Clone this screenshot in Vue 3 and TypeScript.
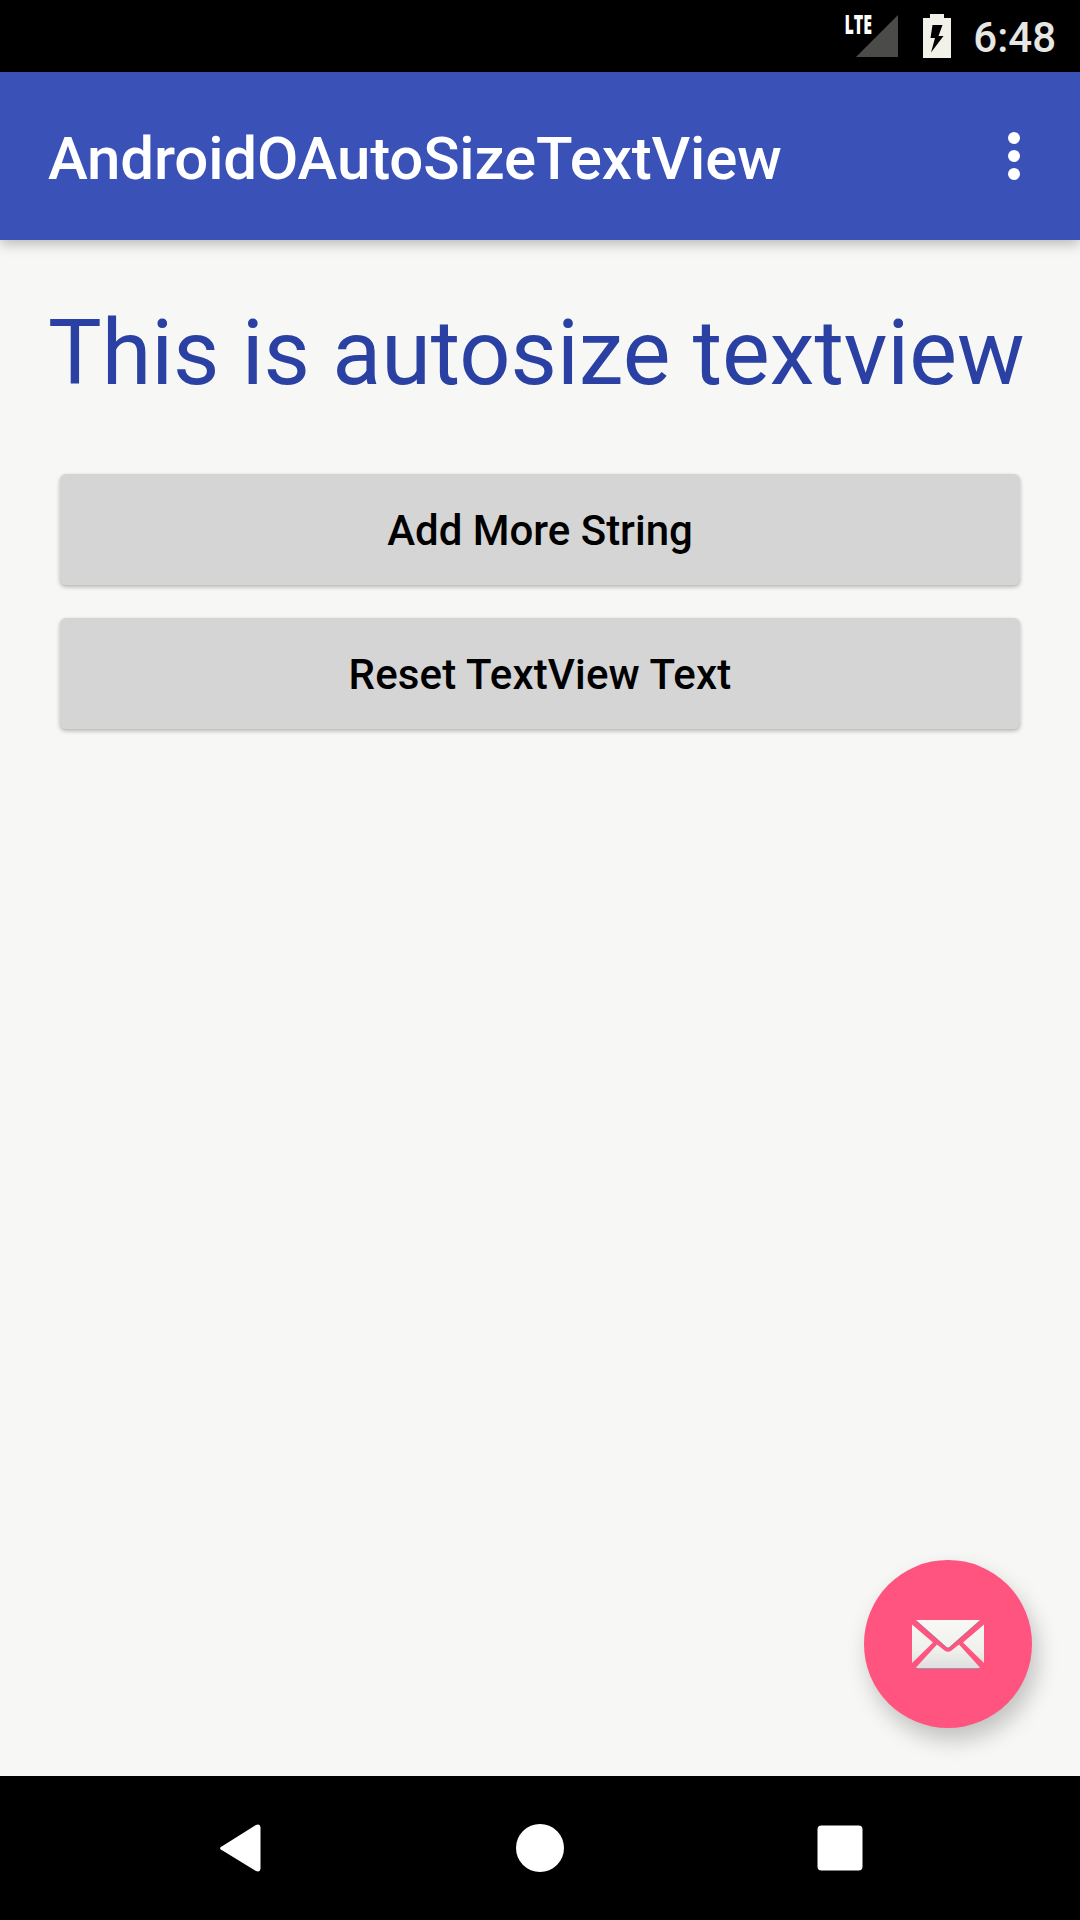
<script setup lang="ts">
import { ref } from 'vue'

const initial = 'This is autosize textview'
const text = ref(initial)

function addMore(): void {
  text.value += ' ' + initial
}

function reset(): void {
  text.value = initial
}
</script>

<template>
  <div class="screen">
    <div class="status-bar">
      <svg class="signal" width="58" height="68" viewBox="-4 -12 58 68">
        <path d="M53 1v42H11z" fill="#4b4b49" />
        <text x="-0.500" y="19.500" textLength="27.500" lengthAdjust="spacingAndGlyphs" class="lte">LTE</text>
      </svg>
      <svg class="battery" width="28" height="44" viewBox="0 0 28 44">
        <path
          fill="#f1f1ea"
          fill-rule="evenodd"
          d="M7 0h14v4h7v40H0V4h7zM9.500 11L7.500 24h4.500L8 38.500 20.500 22h-5L19.500 11z"
        />
      </svg>
      <span class="clock">6:48</span>
    </div>

    <header class="toolbar">
      <h1 class="title">AndroidOAutoSizeTextView</h1>
      <svg class="more" width="12" height="48" viewBox="0 0 12 48" fill="#fff">
        <circle cx="6" cy="6" r="6" />
        <circle cx="6" cy="24" r="6" />
        <circle cx="6" cy="42" r="6" />
      </svg>
    </header>

    <main class="content">
      <p class="auto-text">{{ text }}</p>
      <button class="btn" @click="addMore">Add More String</button>
      <button class="btn btn-reset" @click="reset">Reset TextView Text</button>

      <div class="fab">
        <svg width="72" height="50" viewBox="0 0 72 50">
          <defs>
            <linearGradient id="paper" x1="0" y1="0" x2="0" y2="50" gradientUnits="userSpaceOnUse">
              <stop offset="0" stop-color="#f8f8f4" />
              <stop offset="0.6" stop-color="#f0f0ec" />
              <stop offset="1" stop-color="#dcdcdc" />
            </linearGradient>
          </defs>
          <g fill="#a9708a">
            <path d="M4 1h64L38 27.500q-2 2-4 0z" />
            <path d="M24.500 24.500l8.500 7q3 2 6 0l8.500-7L68 48.500q-1 .8-2 .8H6q-1 0-2-.8z" />
          </g>
          <g fill="url(#paper)">
            <path d="M4 0h64L38 26.500q-2 2-4 0z" />
            <path d="M0 4.500L21 22.500 0 43z" />
            <path d="M72 4.500L51 22.500 72 43z" />
            <path d="M25 24.500l7.500 6q3.500 2.500 7 0l7.500-6L68 47.500q-1 .8-2 .8H6q-1 0-2-.8z" />
          </g>
        </svg>
      </div>
    </main>

    <nav class="nav-bar">
      <svg width="48" height="48" viewBox="-1.500 0 48 48">
        <path d="M5 22L38 1.200Q42.500-1 43 3.500v41q-.5 4.500-5 2.300L5 26.500q-5-2.500 0-4.500z" fill="#fff" />
      </svg>
      <svg width="48" height="48" viewBox="0 0 48 48">
        <circle cx="24" cy="24" r="24" fill="#fff" />
      </svg>
      <svg width="48" height="48" viewBox="0 0 48 48">
        <rect x="1.500" y="1.500" width="45" height="45" rx="4" fill="#fff" />
      </svg>
    </nav>
  </div>
</template>

<style>
body {
  margin: 0;
  background: #f7f7f5;
}
</style>

<style scoped>
.screen {
  box-sizing: border-box;
  display: flex;
  flex-direction: column;
  width: 1080px;
  height: 1920px;
  overflow: hidden;
  background: #f7f7f5;
  font-family: Roboto, 'Liberation Sans', sans-serif;
}

.status-bar {
  display: flex;
  align-items: center;
  justify-content: flex-end;
  flex: none;
  height: 72px;
  padding-right: 24px;
  background: #000;
}

.signal {
  margin-right: 24px;
}

.lte {
  font-family: 'Open Sans', Roboto, sans-serif;
  font-size: 26px;
  font-weight: 800;
  fill: #fff;
}

.battery {
  margin-right: 22px;
}

.clock {
  padding-top: 4px;
  color: #e6e6e3;
  font-size: 42px;
  font-weight: 500;
  line-height: 50px;
}

.toolbar {
  position: relative;
  display: flex;
  align-items: center;
  justify-content: space-between;
  flex: none;
  height: 168px;
  box-sizing: border-box;
  padding: 0 60px 0 48px;
  background: #3a51b7;
  box-shadow: 0 4px 12px rgba(0, 0, 0, 0.25);
}

.title {
  margin: 6px 0 0;
  color: #fff;
  font-size: 60px;
  font-weight: 500;
  line-height: 70px;
  letter-spacing: -0.15px;
}

.content {
  position: relative;
  display: flex;
  flex: 1;
  flex-direction: column;
  padding: 48px;
}

.auto-text {
  height: 186px;
  margin: 0;
  padding-top: 13px;
  box-sizing: border-box;
  color: #2a40a2;
  font-size: 90px;
  line-height: 106px;
  letter-spacing: -0.04px;
  white-space: nowrap;
}

.btn {
  display: block;
  flex: none;
  height: 111px;
  margin: 0 12px 33px;
  padding: 2px 0 0;
  border: 0;
  border-radius: 6px;
  background: #d5d5d5;
  box-shadow: 0 2px 4px rgba(0, 0, 0, 0.28);
  color: #000;
  font-family: inherit;
  font-size: 42px;
  font-weight: 500;
  line-height: 50px;
}

.btn-reset {
  letter-spacing: 0.15px;
}

.fab {
  position: absolute;
  right: 48px;
  bottom: 48px;
  display: flex;
  align-items: center;
  justify-content: center;
  width: 168px;
  height: 168px;
  padding-top: 2px;
  box-sizing: border-box;
  border-radius: 50%;
  background: #ff547f;
  box-shadow: 5px 12px 22px rgba(0, 0, 0, 0.22);
}

.nav-bar {
  display: flex;
  align-items: center;
  justify-content: center;
  gap: 252px;
  flex: none;
  height: 144px;
  background: #000;
}
</style>
